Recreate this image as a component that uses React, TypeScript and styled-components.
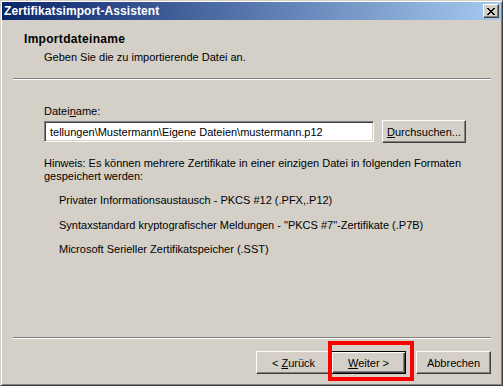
import React from 'react';
import styled, { createGlobalStyle } from 'styled-components';

const GlobalStyle = createGlobalStyle`
    html, body {
        margin: 0;
        padding: 0;
        background: #D4D0C8;
    }

    body {
        font-family: Tahoma, "Liberation Sans", Arial, sans-serif;
        font-size: 11px;
        color: #000;
    }
`;

const Window = styled.div`
    width: 503px;
    height: 386px;
    box-sizing: border-box;
    padding: 1px;

    display: flex;
    flex-direction: column;

    background: #D4D0C8;
    border: 1px solid;
    border-color: #D4D0C8 #404040 #404040 #D4D0C8;
    box-shadow: inset 1px 1px 0 #FFFFFF, inset -1px -1px 0 #808080;
`;

const TitleBar = styled.div`
    height: 18px;
    flex-shrink: 0;
    padding: 0 2px 0 2px;

    display: flex;
    align-items: center;
    justify-content: space-between;

    background: linear-gradient(to right, #0A246A, #A6CAF0);
`;

const TitleText = styled.span`
    color: #FFFFFF;
    font-weight: bold;
    font-size: 12px;
    letter-spacing: 0.1px;
    line-height: 14px;
`;

const CloseButton = styled.div`
    width: 16px;
    height: 14px;
    box-sizing: border-box;

    display: flex;
    align-items: center;
    justify-content: center;

    background: #D4D0C8;
    border-top: 1px solid #FFFFFF;
    border-left: 1px solid #FFFFFF;
    border-right: 1px solid #404040;
    border-bottom: 1px solid #404040;
    box-shadow: inset -1px -1px 0 #808080;
`;

const Header = styled.div`
    height: 58px;
    box-sizing: border-box;
    flex-shrink: 0;
    padding: 13px 0 0 22px;
`;

const HeaderTitle = styled.div`
    font-weight: bold;
    font-size: 12px;
    letter-spacing: 0.3px;
    line-height: 13px;
`;

const HeaderSub = styled.div`
    margin-top: 5px;
    padding-left: 20px;
    line-height: 13px;
`;

const Etched = styled.div`
    height: 0;
    margin: 0 10px 0 11px;
    border-top: 1px solid #808080;
    border-bottom: 1px solid #FFFFFF;
`;

const Content = styled.div`
    flex: 1;
    padding: 25px 0 0 42px;
`;

const Label = styled.div`
    line-height: 13px;
`;

const Key = styled.span`
    text-decoration: underline;
`;

const FileRow = styled.div`
    margin-top: 2px;
    height: 23px;

    display: flex;
    align-items: center;
    gap: 8px;
`;

const FileInput = styled.input`
    width: 330px;
    height: 21px;
    box-sizing: border-box;
    margin: 0;
    padding: 0 4px 0 5px;

    font-family: inherit;
    font-size: 11px;
    color: #000;
    background: #FFFFFF;
    outline: none;

    border-top: 1px solid #808080;
    border-left: 1px solid #808080;
    border-right: 1px solid #FFFFFF;
    border-bottom: 1px solid #FFFFFF;
    box-shadow: inset 1px 1px 0 #404040, inset -1px -1px 0 #D4D0C8;
`;

const Button = styled.button<{ $width?: number; $default?: boolean }>`
    width: ${p => p.$width ?? 75}px;
    height: 23px;
    box-sizing: border-box;
    margin: 0;
    padding: 0;

    font-family: inherit;
    font-size: 11px;
    color: #000;
    background: #D4D0C8;

    border: 1px solid;
    border-color: ${p => p.$default
        ? '#000000'
        : '#FFFFFF #404040 #404040 #FFFFFF'};
    box-shadow: ${p => p.$default
        ? 'inset 1px 1px 0 #FFFFFF, inset -1px -1px 0 #404040, inset -2px -2px 0 #808080'
        : 'inset -1px -1px 0 #808080'};

    &:hover {
        cursor: pointer;
    }
`;

const Note = styled.div`
    margin-top: 14px;
    width: 420px;
    line-height: 13px;
`;

const FormatList = styled.ul`
    margin: 11px 0 0 0;
    padding-left: 15px;

    display: flex;
    flex-direction: column;
    gap: 11.5px;
`;

const FormatItem = styled.li`
    list-style: none;
    line-height: 13px;
`;

const Footer = styled.div`
    height: 45px;
    box-sizing: border-box;
    flex-shrink: 0;
    padding: 12px 10px 0 0;

    display: flex;
    justify-content: flex-end;
    align-items: flex-start;
    gap: 10px;
`;

const NavGroup = styled.div`
    position: relative;
    display: flex;
`;

const Highlight = styled.div`
    position: absolute;
    left: 72px;
    top: -10px;
    width: 86px;
    height: 40px;
    box-sizing: border-box;
    border: 4px solid #FF0000;
    pointer-events: none;
`;

function CloseGlyph() {
    const rows = [
        'XX....XX',
        '.XX..XX.',
        '..XXXX..',
        '...XX...',
        '..XXXX..',
        '.XX..XX.',
        'XX....XX',
    ];
    return (
        <svg width="8" height="7" viewBox="0 0 8 7" shapeRendering="crispEdges">
            {rows.flatMap((row, y) =>
                row.split('').map((c, x) =>
                    c === 'X' ? <rect key={`${x}-${y}`} x={x} y={y} width="1" height="1" fill="#000" /> : null
                )
            )}
        </svg>
    );
}

function App() {
    return (
        <>
            <GlobalStyle />
            <Window>
                <TitleBar>
                    <TitleText>Zertifikatsimport-Assistent</TitleText>
                    <CloseButton><CloseGlyph /></CloseButton>
                </TitleBar>
                <Header>
                    <HeaderTitle>Importdateiname</HeaderTitle>
                    <HeaderSub>Geben Sie die zu importierende Datei an.</HeaderSub>
                </Header>
                <Etched />
                <Content>
                    <Label>Datei<Key>n</Key>ame:</Label>
                    <FileRow>
                        <FileInput readOnly value="tellungen\Mustermann\Eigene Dateien\mustermann.p12" />
                        <Button $width={84}><Key>D</Key>urchsuchen...</Button>
                    </FileRow>
                    <Note>
                        Hinweis: Es können mehrere Zertifikate in einer einzigen Datei in folgenden Formaten gespeichert werden:
                    </Note>
                    <FormatList>
                        <FormatItem>Privater Informationsaustausch - PKCS #12 (.PFX,.P12)</FormatItem>
                        <FormatItem>Syntaxstandard kryptografischer Meldungen - "PKCS #7"-Zertifikate (.P7B)</FormatItem>
                        <FormatItem>Microsoft Serieller Zertifikatspeicher (.SST)</FormatItem>
                    </FormatList>
                </Content>
                <Etched />
                <Footer>
                    <NavGroup>
                        <Button>&lt; <Key>Z</Key>urück</Button>
                        <Button $default><Key>W</Key>eiter &gt;</Button>
                        <Highlight />
                    </NavGroup>
                    <Button>Abbrechen</Button>
                </Footer>
            </Window>
        </>
    );
}

export default App;
